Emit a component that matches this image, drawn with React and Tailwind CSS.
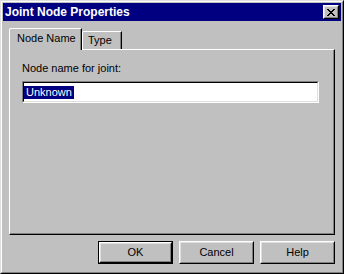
import React from "react";

function Btn({ children, def }) {
  const inner = (
    <div className="h-full border border-t-white border-l-white border-r-black border-b-black">
      <div className="h-full border border-t-[#dfdfdf] border-l-[#dfdfdf] border-r-[#808080] border-b-[#808080] flex items-center justify-center text-[11px] text-black">
        {children}
      </div>
    </div>
  );
  if (def) {
    return <div className="w-[75px] h-[23px] border border-black">{inner}</div>;
  }
  return <div className="w-[75px] h-[23px]">{inner}</div>;
}

export default function App() {
  return (
    <div
      className="w-[344px] h-[274px] bg-[#c0c0c0] border border-t-[#dfdfdf] border-l-[#dfdfdf] border-r-black border-b-black"
      style={{ fontFamily: '"Liberation Sans", Arial, sans-serif' }}
    >
      <div className="h-full border border-t-white border-l-white border-r-[#808080] border-b-[#808080] p-px flex flex-col">
        {/* Title bar */}
        <div className="h-[18px] bg-[#000080] flex items-center justify-between pl-[2px] pr-[2px]">
          <span className="text-white font-bold text-[12px] leading-none">Joint Node Properties</span>
          <div className="w-[16px] h-[14px] border border-t-white border-l-white border-r-black border-b-black">
            <div className="h-full border border-t-[#dfdfdf] border-l-[#dfdfdf] border-r-[#808080] border-b-[#808080] bg-[#c0c0c0] flex items-center justify-center">
              <svg width="8" height="7" viewBox="0 0 8 7" shapeRendering="crispEdges">
                <path
                  fill="#000"
                  d="M0 0h2v1H0zM6 0h2v1H6zM1 1h2v1H1zM5 1h2v1H5zM2 2h4v1H2zM3 3h2v1H3zM2 4h4v1H2zM1 5h2v1H1zM5 5h2v1H5zM0 6h2v1H0zM6 6h2v1H6z"
                />
              </svg>
            </div>
          </div>
        </div>

        {/* Body */}
        <div className="flex flex-col px-[6px] pt-[7px]">
          {/* Tabs */}
          <div className="flex items-end h-[21px]">
            <div className="relative z-10 w-[73px] h-[22px] -mb-px bg-[#c0c0c0] border-t border-l border-t-white border-l-white rounded-tl-[2px] border-r border-r-black">
              <div className="h-full border-r border-r-[#808080] pl-[7px] pt-[3px] text-[11px] text-black leading-[13px]">
                Node Name
              </div>
            </div>
            <div className="w-[40px] h-[18px] border-t border-l border-t-white border-l-white rounded-tl-[2px] border-r border-r-black">
              <div className="h-full border-r border-r-[#808080] pl-[5px] pt-[2px] text-[11px] text-black leading-[13px]">
                Type
              </div>
            </div>
          </div>

          {/* Panel */}
          <div className="h-[186px] border border-t-white border-l-white border-r-black border-b-black">
            <div className="h-full border-r border-b border-r-[#808080] border-b-[#808080] pl-[12px] pt-[12px]">
              <div className="text-[11px] leading-[13px] text-black">Node name for joint:</div>
              <div className="mt-[6px] w-[297px] h-[22px] border border-t-[#808080] border-l-[#808080] border-r-white border-b-white">
                <div className="h-full border border-t-black border-l-black border-r-[#dfdfdf] border-b-[#dfdfdf] bg-white flex items-center pl-0">
                  <span className="bg-[#000080] text-white text-[11px] leading-[13px] px-[2px]">Unknown</span>
                </div>
              </div>
            </div>
          </div>

          {/* Buttons */}
          <div className="flex justify-end gap-[6px] mt-[6px]">
            <Btn def>OK</Btn>
            <Btn>Cancel</Btn>
            <Btn>Help</Btn>
          </div>
        </div>
      </div>
    </div>
  );
}
